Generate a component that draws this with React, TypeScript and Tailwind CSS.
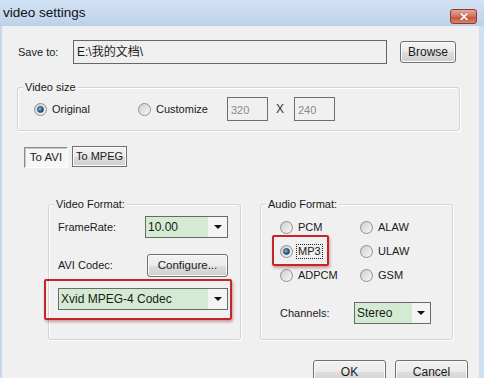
import React from 'react';

const btn =
  'flex items-center justify-center rounded-[3px] border border-[#707070] bg-[linear-gradient(#f2f2f2_0%,#ebebeb_50%,#dddddd_51%,#cfcfcf_100%)] shadow-[inset_0_0_0_1px_#fbfbfb] text-[#1a1a1a]'

const Radio = ({ checked }: { checked?: boolean }) => (
  <span className="flex h-[13px] w-[13px] shrink-0 items-center justify-center rounded-full border border-[#8e8f8f] bg-[linear-gradient(135deg,#cfcfcf,#f7f7f7)]">
    {checked && (
      <span className="h-[7px] w-[7px] rounded-full border border-[#20486b] bg-[radial-gradient(circle_at_35%_35%,#8cc0ea,#2a5c88_60%,#15334f)]" />
    )}
  </span>
)

const RadioItem = ({ label, checked, focus }: { label: string; checked?: boolean; focus?: boolean }) => (
  <div className="flex h-[24px] items-center gap-[3px]">
    <Radio checked={checked} />
    <span className={focus ? 'border border-dotted border-[#222] px-[1px] leading-[13px]' : 'px-[2px]'}>{label}</span>
  </div>
)

const Combo = ({ value, width, greenWidth }: { value: string; width: string; greenWidth: string }) => (
  <div className={`flex h-[22px] border border-[#6a6a6a] bg-[#f4f4f4] ${width}`}>
    <div className={`flex items-center bg-[#d4ebd3] pl-[2px] text-[12px] ${greenWidth}`}>{value}</div>
    <div className="flex flex-1 items-center justify-center">
      <span className="h-0 w-0 border-x-[4px] border-t-[4px] border-x-transparent border-t-[#111]" />
    </div>
  </div>
)

const Group = ({ title, className, children }: { title: string; className: string; children: React.ReactNode }) => (
  <div className={`relative rounded-[3px] border border-[#d3d3d3] shadow-[inset_1px_1px_0_#ffffff,1px_1px_0_#ffffff] ${className}`}>
    <span className="absolute -top-[8px] left-[5px] bg-[#f0f0f0] px-[2px] leading-[14px]">{title}</span>
    {children}
  </div>
)

export default function App() {
  return (
    <div className="flex h-[378px] w-[484px] flex-col overflow-hidden bg-[#f0f0f0] font-['Liberation_Sans',Arial,sans-serif] text-[11px] text-[#1a1a1a]">
      {/* title bar */}
      <div className="flex h-[26px] shrink-0 items-start justify-between bg-[linear-gradient(#d3e2f4,#bcd2ea)] pl-[3px] pr-[7px]">
        <span className="mt-[5px] text-[13.5px] leading-[16px] text-[#111]">video settings</span>
        <div className="mt-[9px] flex h-[15px] w-[27px] items-center justify-center rounded-[3px] border border-[#8a3b32] bg-[linear-gradient(#e6a898,#d46f5a_50%,#c4503a_51%,#d88468)]">
          <span className="text-[12px] font-bold leading-[12px] text-white [text-shadow:0_0_1px_#5a1a10]">✕</span>
        </div>
      </div>

      <div className="flex flex-1 flex-col border-l-[2px] border-r-[5px] border-l-[#c6d8ee] border-r-[#cddff1]">
        {/* save to */}
        <div className="mt-[14px] flex items-center">
          <span className="ml-[16px] w-[55px]">Save to:</span>
          <div className="flex h-[24px] w-[314px] items-center border border-[#666] bg-[#efefef] pl-[3px] font-['Liberation_Sans','Noto_Sans_CJK_SC',sans-serif] text-[12px]">
            E:\我的文档\
          </div>
          <div className={`${btn} ml-[13px] h-[22px] w-[56px] text-[12px]`}>Browse</div>
        </div>

        {/* video size */}
        <Group title="Video size" className="ml-[15px] mt-[23px] h-[44px] w-[443px]">
          <div className="flex h-full items-center pl-[16px]">
            <div className="w-[104px]">
              <RadioItem label="Original" checked />
            </div>
            <div className="w-[89px]">
              <RadioItem label="Customize" />
            </div>
            <div className="h-[24px] w-[41px] border border-[#6e6e6e] pl-[3px] pt-[4px] text-[#8a8a8a]">320</div>
            <span className="w-[26px] pr-[2px] text-center text-[12px] text-[#333]">X</span>
            <div className="h-[24px] w-[41px] border border-[#6e6e6e] pl-[3px] pt-[4px] text-[#8a8a8a]">240</div>
          </div>
        </Group>

        {/* tabs */}
        <div className="ml-[22px] mt-[16px] flex items-start">
          <div className="flex h-[21px] w-[44px] items-center justify-center border border-[#8d8d8d] border-r-[#fff] border-b-[#fff] bg-[#f6f6f6] text-[11.5px] shadow-[inset_1px_1px_0_#c8c8c8]">
            To AVI
          </div>
          <div className={`${btn} -mt-[1px] ml-[4px] h-[21px] w-[55px] rounded-none border-[#8d8d8d] text-[11px]`}>To MPEG</div>
        </div>

        {/* format groups */}
        <div className="mt-[36px] flex">
          <Group title="Video Format:" className="ml-[46px] h-[136px] w-[193px]">
            <div className="flex flex-col pl-[9px] pt-[11px]">
              <div className="flex items-center">
                <span className="w-[87px]">FrameRate:</span>
                <Combo value="10.00" width="w-[83px]" greenWidth="w-[62px]" />
              </div>
              <div className="mt-[16px] flex items-center">
                <span className="w-[89px]">AVI Codec:</span>
                <div className={`${btn} h-[23px] w-[81px] text-[11.5px]`}>Configure...</div>
              </div>
              <div className="relative mt-[11px] w-[170px]">
                <span className="absolute -bottom-[10px] -left-[14px] -right-[4px] -top-[9px] rounded-[2px] border-2 border-[#c7232b] shadow-[1px_2px_3px_rgba(120,0,0,0.35)]" />
                <Combo value="Xvid MPEG-4 Codec" width="w-[170px]" greenWidth="w-[149px]" />
              </div>
            </div>
          </Group>

          <Group title="Audio Format:" className="ml-[19px] h-[136px] w-[193px]">
            <div className="flex flex-col pl-[19px] pt-[10px]">
              <div className="grid w-[160px] grid-cols-[80px_80px]">
                <RadioItem label="PCM" />
                <RadioItem label="ALAW" />
                <div className="relative">
                  <span className="absolute -left-[8px] -top-[4px] h-[31px] w-[57px] rounded-[2px] border-2 border-[#c7232b] shadow-[1px_2px_3px_rgba(120,0,0,0.35)]" />
                  <RadioItem label="MP3" checked focus />
                </div>
                <RadioItem label="ULAW" />
                <RadioItem label="ADPCM" />
                <RadioItem label="GSM" />
              </div>
              <div className="mt-[15px] flex items-center">
                <span className="w-[74px]">Channels:</span>
                <Combo value="Stereo" width="w-[77px]" greenWidth="w-[57px]" />
              </div>
            </div>
          </Group>
        </div>

        {/* bottom buttons */}
        <div className="mt-[20px] flex justify-end gap-[9px] pr-[11px]">
          <div className={`${btn} h-[24px] w-[73px] border-[#3c7fb1] shadow-[inset_0_0_0_1px_#bfe6f7] text-[12px]`}>OK</div>
          <div className={`${btn} h-[24px] w-[73px] text-[12px]`}>Cancel</div>
        </div>
      </div>
    </div>
  )
}
